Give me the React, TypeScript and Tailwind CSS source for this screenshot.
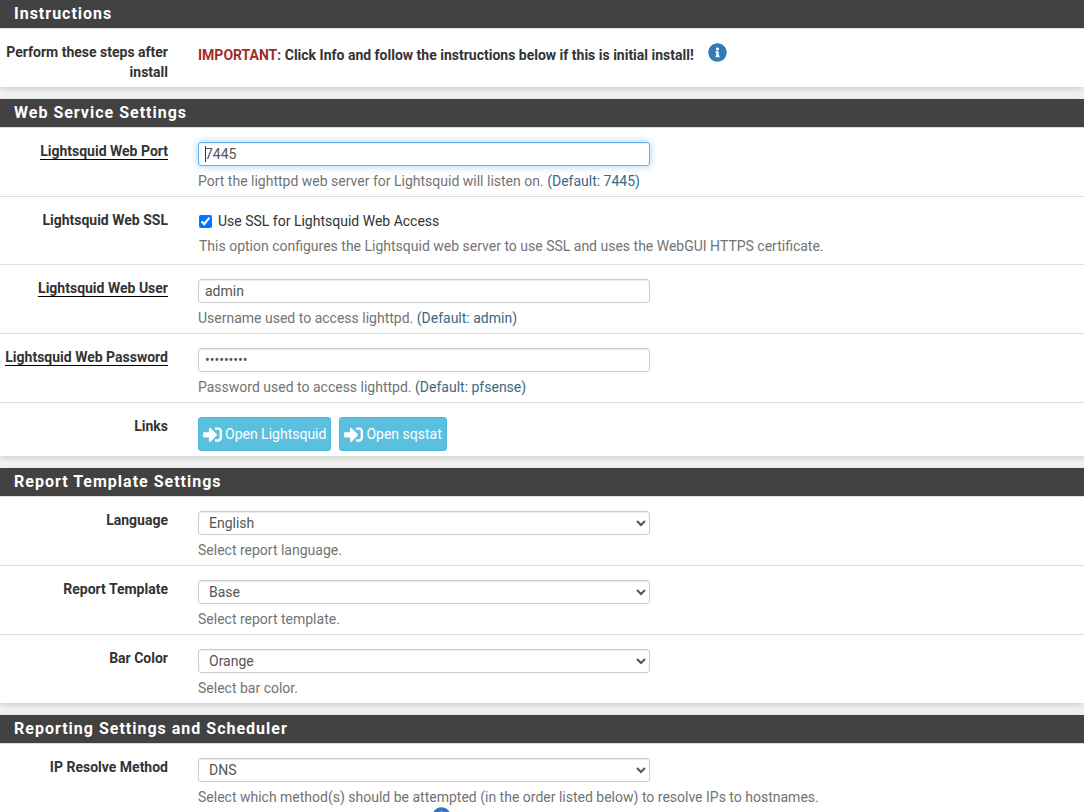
import { ReactNode, useState } from 'react'
import { FaInfoCircle, FaSignInAlt } from 'react-icons/fa'
import clsx from 'clsx'

const inputClass =
    'block h-6 w-full rounded-[3px] border border-[#ccc] bg-white px-1.5 text-sm text-[#555] shadow-[inset_0_1px_1px_rgba(0,0,0,0.075)] outline-none focus:border-[#66afe9] focus:shadow-[inset_0_1px_1px_rgba(0,0,0,0.075),0_0_8px_rgba(102,175,233,0.6)]'

const selectClass =
    'block h-6 w-full max-w-[452px] rounded-[3px] border border-[#ccc] bg-white px-1.5 text-sm leading-5 text-[#555] shadow-[inset_0_1px_1px_rgba(0,0,0,0.075)] outline-none'

function Panel({ title, children }: { title: string; children: ReactNode }) {
    return (
        <section className="mb-3 bg-white shadow-[0_2px_6px_rgba(0,0,0,0.15)]">
            <h2 className="h-[29px] border-b border-[#ddd] bg-[#424242] px-[14px] text-base leading-7 font-bold tracking-[1px] text-white">
                {title}
            </h2>
            <div className="divide-y divide-[#ddd]">{children}</div>
        </section>
    )
}

interface RowProps {
    label: string
    htmlFor?: string
    required?: boolean
    children: ReactNode
}

function Row({ label, htmlFor, required, children }: RowProps) {
    const text = <span className={clsx(required && 'border-b border-black')}>{label}</span>

    return (
        <div className="flex gap-[30px] pt-[14px] pb-[5px]">
            <div className="-mt-px w-[168px] shrink-0 text-right font-bold text-[#333]">
                {htmlFor ? <label htmlFor={htmlFor}>{text}</label> : text}
            </div>
            <div className="min-w-0 flex-1">{children}</div>
        </div>
    )
}

function Help({ text, hint }: { text: string; hint?: string }) {
    return (
        <p className="mt-[5px] text-[#737373]">
            {text} {hint && <span className="text-[#3b6883]">({hint})</span>}
        </p>
    )
}

function SelectRow({ id, label, options, help }: { id: string; label: string; options: string[]; help: string }) {
    return (
        <Row label={label} htmlFor={id}>
            <select id={id} className={selectClass}>
                {options.map((option) => (
                    <option key={option}>{option}</option>
                ))}
            </select>
            <Help text={help} />
        </Row>
    )
}

function InfoButton() {
    return (
        <button type="button" aria-label="Info" className="text-[#337ab7]">
            <FaInfoCircle size={19} />
        </button>
    )
}

export default function App() {
    const [port, setPort] = useState('7445')
    const [editing, setEditing] = useState(false)
    const [ssl, setSsl] = useState(true)
    const [user, setUser] = useState('admin')
    const [password, setPassword] = useState('lightsqui')

    return (
        <form className="h-screen overflow-hidden bg-[#f1f1f1] font-[Roboto,sans-serif] text-sm leading-5">
            <Panel title="Instructions">
                <Row label="Perform these steps after install">
                    <div className="flex items-start gap-[14px] font-bold text-[#333]">
                        <p className="pt-0.5">
                            <span className="text-[#a52a2a]">IMPORTANT:</span> Click Info and follow the instructions below if
                            this is initial install!
                        </p>
                        <InfoButton />
                    </div>
                </Row>
            </Panel>

            <Panel title="Web Service Settings">
                <Row label="Lightsquid Web Port" htmlFor="port" required>
                    <div className="relative max-w-[452px]">
                        <input
                            id="port"
                            className={clsx(inputClass, !editing && 'caret-transparent')}
                            value={port}
                            autoFocus
                            onKeyDown={() => setEditing(true)}
                            onChange={(e) => setPort(e.target.value)}
                        />
                        {/* Caret at rest, until the user starts typing */}
                        {!editing && <span aria-hidden className="absolute top-1 left-[7px] h-4 w-px bg-[#333]" />}
                    </div>
                    <Help text="Port the lighttpd web server for Lightsquid will listen on." hint="Default: 7445" />
                </Row>
                <Row label="Lightsquid Web SSL" htmlFor="ssl">
                    <div className="pb-[3px] pl-px">
                        <label className="flex items-center gap-1.5 text-[#333]">
                            <input id="ssl" type="checkbox" checked={ssl} onChange={(e) => setSsl(e.target.checked)} />
                            Use SSL for Lightsquid Web Access
                        </label>
                        <Help text="This option configures the Lightsquid web server to use SSL and uses the WebGUI HTTPS certificate." />
                    </div>
                </Row>
                <Row label="Lightsquid Web User" htmlFor="user" required>
                    <div className="max-w-[452px]">
                        <input id="user" className={inputClass} value={user} onChange={(e) => setUser(e.target.value)} />
                    </div>
                    <Help text="Username used to access lighttpd." hint="Default: admin" />
                </Row>
                <Row label="Lightsquid Web Password" htmlFor="password" required>
                    <div className="max-w-[452px]">
                        <input
                            id="password"
                            type="password"
                            className={inputClass}
                            value={password}
                            onChange={(e) => setPassword(e.target.value)}
                        />
                    </div>
                    <Help text="Password used to access lighttpd." hint="Default: pfsense" />
                </Row>
                <Row label="Links">
                    <div className="flex gap-2">
                        {['Open Lightsquid', 'Open sqstat'].map((name) => (
                            <button
                                key={name}
                                type="button"
                                className="flex h-[34px] items-center gap-[3px] rounded-[3px] border border-[#46b8da] bg-[#5bc0de] px-1 text-white"
                            >
                                <FaSignInAlt size={19} />
                                {name}
                            </button>
                        ))}
                    </div>
                </Row>
            </Panel>

            <Panel title="Report Template Settings">
                <SelectRow id="language" label="Language" options={['English']} help="Select report language." />
                <SelectRow id="template" label="Report Template" options={['Base']} help="Select report template." />
                <SelectRow id="color" label="Bar Color" options={['Orange']} help="Select bar color." />
            </Panel>

            <Panel title="Reporting Settings and Scheduler">
                <Row label="IP Resolve Method" htmlFor="resolve">
                    <select id="resolve" className={selectClass}>
                        <option>DNS</option>
                    </select>
                    <Help text="Select which method(s) should be attempted (in the order listed below) to resolve IPs to hostnames." />
                    <div className="flex max-w-[486px] justify-center">
                        <InfoButton />
                    </div>
                </Row>
            </Panel>
        </form>
    )
}
